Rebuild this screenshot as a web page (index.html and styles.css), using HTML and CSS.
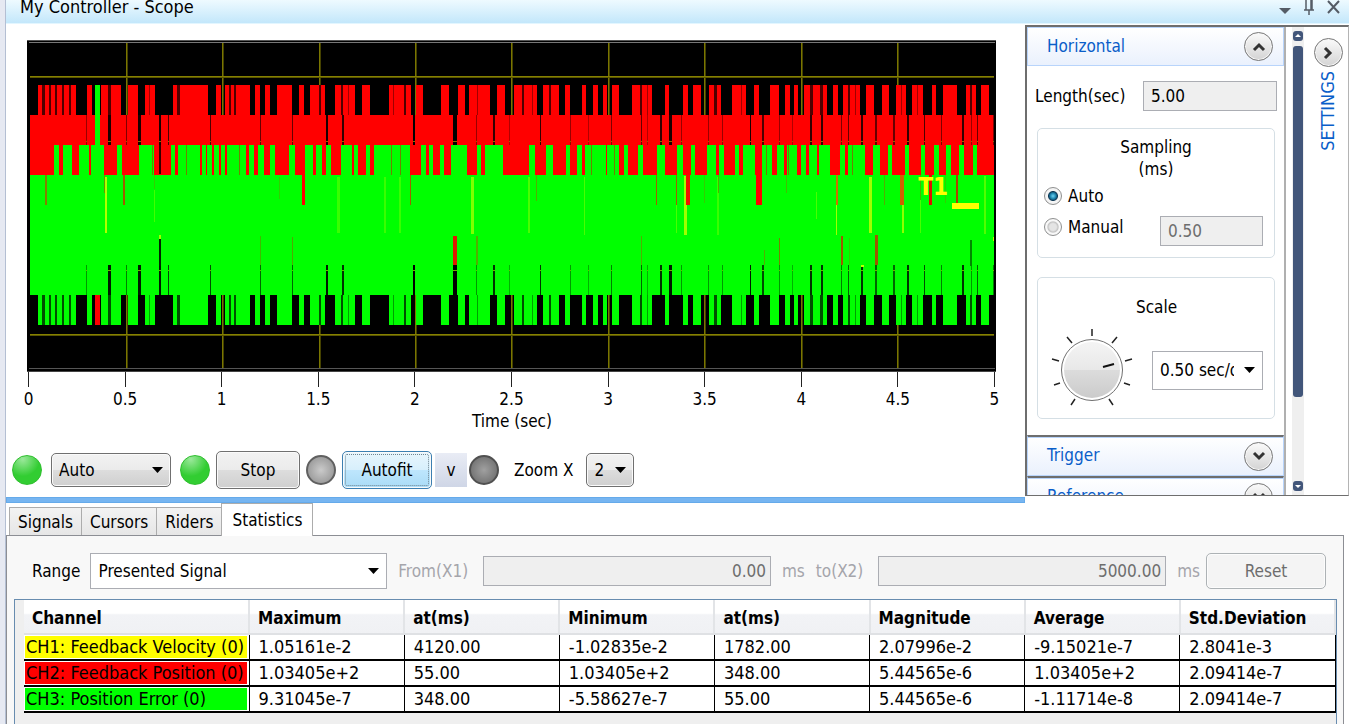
FILE: index.html
```html
<!DOCTYPE html>
<html lang="en">
<head>
    <meta charset="UTF-8">
    <meta name="viewport" content="width=device-width, initial-scale=1.0">
    <title>My Controller - Scope</title>
    <link rel="stylesheet" href="styles.css">
</head>
<body>
    <div class="window">
        <header class="titlebar">
            <h1>My Controller - Scope</h1>
            <div class="title-buttons">
                <button aria-label="Menu"><svg width="12" height="14"><path d="M0 7h12l-6 6z" fill="#555c66"/></svg></button>
                <button aria-label="Pin"><svg width="12" height="16"><path d="M3 0v10M8 0v10M9 0v10M1 10h10M6 10v5" stroke="#555c66" stroke-width="1.5" fill="none"/></svg></button>
                <button aria-label="Close"><svg width="14" height="16"><path d="M1 1l11 12M12 1L1 13" stroke="#555c66" stroke-width="2" fill="none"/></svg></button>
            </div>
        </header>

        <div class="top">
            <main class="scope">
                <div class="plot">
                    <svg id="trace" viewBox="27 40 969 332" preserveAspectRatio="none"></svg>
                    <span class="marker-name">T1</span>
                    <span class="marker-line"></span>
                </div>
                <ul class="axis">
                    <li>0</li><li>0.5</li><li>1</li><li>1.5</li><li>2</li><li>2.5</li><li>3</li><li>3.5</li><li>4</li><li>4.5</li><li>5</li>
                </ul>
                <p class="axis-title">Time (sec)</p>

                <div class="toolbar">
                    <span class="led green"></span>
                    <select class="raised mode" aria-label="Mode"><option>Auto</option></select>
                    <span class="led green"></span>
                    <button class="raised stop">Stop</button>
                    <span class="led gray"></span>
                    <button class="raised autofit">Autofit</button>
                    <button class="more">v</button>
                    <span class="led dark"></span>
                    <label for="zoom" class="zoom-label">Zoom X</label>
                    <select id="zoom" class="raised zoom"><option>2</option></select>
                </div>
                <div class="splitter"></div>
            </main>

            <aside class="settings">
                <div class="accordion">
                    <div class="acc-head">
                        <h2>Horizontal</h2>
                        <button class="round" aria-label="Collapse"><svg width="16" height="12"><path d="M3 9l5-5 5 5" stroke="#333" stroke-width="3" fill="none"/></svg></button>
                    </div>
                    <div class="acc-body">
                        <div class="length">
                            <label for="length">Length(sec)</label>
                            <input id="length" class="field" type="text" value="5.00">
                        </div>
                        <fieldset class="group sampling">
                            <p>Sampling<br>(ms)</p>
                            <div class="choice">
                                <input type="radio" name="sampling" id="auto" checked>
                                <label for="auto">Auto</label>
                            </div>
                            <div class="choice">
                                <input type="radio" name="sampling" id="manual">
                                <label for="manual">Manual</label>
                                <input class="field" type="text" value="0.50" aria-label="Sampling time" disabled>
                            </div>
                        </fieldset>
                        <fieldset class="group scale">
                            <p>Scale</p>
                            <div class="scale-row">
                                <svg width="84" height="84" viewBox="-42 -42 84 84">
                                    <defs>
                                        <linearGradient id="knob" x1="0" y1="0" x2="0" y2="1">
                                            <stop offset="0" stop-color="#f4f4f4"/>
                                            <stop offset=".5" stop-color="#e8e8e8"/>
                                            <stop offset=".5" stop-color="#dcdcdc"/>
                                            <stop offset="1" stop-color="#cbcbcb"/>
                                        </linearGradient>
                                    </defs>
                                    <circle r="30.5" fill="#fff" stroke="#707070"/>
                                    <circle r="28" fill="url(#knob)"/>
                                    <path d="M11-3L22-6" stroke="#111" stroke-width="2"/>
                                    <path d="M0-41v7M25-33l-5 6M40-11l-7 2M38 15l-6-2M21 35l-4-6M-25-33l5 6M-40-11l7 2M-38 15l6-2M-21 35l4-6" stroke="#222" stroke-width="1.5"/>
                                </svg>
                                <select class="flat" aria-label="Scale"><option>0.50 sec/div</option></select>
                            </div>
                        </fieldset>
                    </div>
                    <div class="acc-head">
                        <h2>Trigger</h2>
                        <button class="round" aria-label="Expand"><svg width="16" height="12"><path d="M3 3l5 5 5-5" stroke="#333" stroke-width="3" fill="none"/></svg></button>
                    </div>
                    <div class="acc-head">
                        <h2>Reference</h2>
                        <button class="round" aria-label="Expand"><svg width="16" height="12"><path d="M3 3l5 5 5-5" stroke="#333" stroke-width="3" fill="none"/></svg></button>
                    </div>
                </div>
                <div class="scrollbar">
                    <button aria-label="Scroll up"><svg width="10" height="10"><rect width="10" height="10" rx="3" fill="#42567a"/><path d="M2 6h6L5 3z" fill="#fff"/></svg></button>
                    <div class="thumb"></div>
                    <button aria-label="Scroll down"><svg width="10" height="10"><rect width="10" height="10" rx="3" fill="#42567a"/><path d="M2 4h6L5 7z" fill="#fff"/></svg></button>
                </div>
                <div class="side">
                    <button class="round" aria-label="Hide settings"><svg width="12" height="16"><path d="M3 3l5 5-5 5" stroke="#333" stroke-width="3" fill="none"/></svg></button>
                    <span>SETTINGS</span>
                </div>
            </aside>
        </div>

        <nav class="tabs">
            <button>Signals</button>
            <button>Cursors</button>
            <button>Riders</button>
            <button class="active">Statistics</button>
        </nav>

        <section class="stats">
            <div class="filter">
                <label for="range">Range</label>
                <select id="range" class="flat"><option>Presented Signal</option></select>
                <label for="x1" class="off from">From(X1)</label>
                <input id="x1" class="field" type="text" value="0.00" disabled>
                <span class="off unit">ms</span>
                <label for="x2" class="off to">to(X2)</label>
                <input id="x2" class="field" type="text" value="5000.00" disabled>
                <span class="off unit last">ms</span>
                <button class="reset" disabled>Reset</button>
            </div>
            <div class="grid">
                <table>
                    <colgroup><col class="c-channel"><col><col><col><col><col><col><col></colgroup>
                    <thead>
                        <tr><th>Channel</th><th>Maximum</th><th>at(ms)</th><th>Minimum</th><th>at(ms)</th><th>Magnitude</th><th>Average</th><th>Std.Deviation</th></tr>
                    </thead>
                    <tbody>
                        <tr><td><span class="ch yellow">CH1: Feedback Velocity (0)</span></td><td>1.05161e-2</td><td>4120.00</td><td>-1.02835e-2</td><td>1782.00</td><td>2.07996e-2</td><td>-9.15021e-7</td><td>2.8041e-3</td></tr>
                        <tr><td><span class="ch red">CH2: Feedback Position (0)</span></td><td>1.03405e+2</td><td>55.00</td><td>1.03405e+2</td><td>348.00</td><td>5.44565e-6</td><td>1.03405e+2</td><td>2.09414e-7</td></tr>
                        <tr><td><span class="ch lime">CH3: Position Error (0)</span></td><td>9.31045e-7</td><td>348.00</td><td>-5.58627e-7</td><td>55.00</td><td>5.44565e-6</td><td>-1.11714e-8</td><td>2.09414e-7</td></tr>
                    </tbody>
                </table>
            </div>
        </section>
    </div>
    <script src="scope.js"></script>
</body>
</html>
```
FILE: styles.css
```css
* {
    box-sizing: border-box;
}
body {
    margin: 0;
    background: #e6e9f2;
    color: #000;
    font-family: "DejaVu Sans Condensed", "DejaVu Sans", sans-serif;
    font-size: 17px;
    line-height: 22px;
    overflow: hidden;
}
button, input, select {
    font: inherit;
    color: inherit;
    margin: 0;
}
button {
    padding: 0;
    border: none;
    background: none;
}
p, h1, h2, ul, fieldset {
    margin: 0;
    padding: 0;
}
.window {
    display: flex;
    flex-direction: column;
    min-height: 100vh;
    margin-left: 5px;
    background: #fff;
    border-left: 1px solid #b4bfd3;
}
.titlebar {
    display: flex;
    justify-content: space-between;
    align-items: flex-start;
    height: 24px;
    margin-right: 5px;
    padding: 0 8px 0 14px;
    background: linear-gradient(#eefaff, #c3e7fb);
    border-bottom: 1px solid #e3f6ff;
    overflow: hidden;
}
.titlebar h1 {
    font-size: 18px;
    font-weight: normal;
    line-height: 14px;
}
.title-buttons {
    display: flex;
    gap: 12px;
}
.title-buttons svg {
    display: block;
}
.top {
    display: flex;
    height: 479px;
    margin-right: 5px;
}
.scope {
    display: flex;
    flex-direction: column;
    flex: 1;
    min-width: 0;
    padding-top: 16px;
}
.plot {
    position: relative;
    height: 332px;
    margin: 0 29px 0 21px;
}
.plot svg {
    display: block;
    width: 100%;
    height: 100%;
}
.marker-name {
    position: absolute;
    top: 136px;
    right: 48px;
    color: #ff0;
    font-size: 24px;
    font-weight: bold;
}
.marker-line {
    position: absolute;
    top: 163px;
    right: 17px;
    width: 27px;
    height: 6px;
    background: #ff0;
}
.axis {
    display: flex;
    justify-content: space-between;
    margin: 0 30px 0 22px;
    list-style: none;
}
.axis li {
    display: flex;
    flex-direction: column;
    align-items: center;
    width: 1px;
}
.axis li::before {
    content: "";
    width: 1px;
    height: 15px;
    margin-bottom: 1px;
    background: #222;
}
.axis-title {
    padding-right: 7px;
    text-align: center;
}
.toolbar {
    display: flex;
    align-items: center;
    height: 40px;
    margin-top: 18px;
    padding-left: 6px;
}
.led {
    flex: none;
    width: 30px;
    height: 30px;
    border-radius: 50%;
}
.led.green {
    background: radial-gradient(circle at 35% 12%, #9be89b, #32cd32 55%);
    border: 1px solid #2fbf2f;
}
.led.gray {
    background: radial-gradient(#cacaca, #8c8c8c);
    border: 2px solid #606060;
}
.led.dark {
    margin-left: 2px;
    background: radial-gradient(#a0a0a0, #666);
    border: 2px solid #505050;
}
select {
    appearance: none;
    border-radius: 0;
    background: url("data:image/svg+xml,%3Csvg xmlns='http://www.w3.org/2000/svg' width='11' height='6'%3E%3Cpath d='M0 0h11L5.5 6z'/%3E%3C/svg%3E") no-repeat right 7px center #fff;
}
.raised {
    border: 1px solid #707070;
    border-radius: 5px;
    background-color: #e4e4e4;
    box-shadow: inset 0 0 0 1px #fafafa;
}
.mode, .zoom {
    height: 34px;
    padding-left: 7px;
    background-image: url("data:image/svg+xml,%3Csvg xmlns='http://www.w3.org/2000/svg' width='11' height='6'%3E%3Cpath d='M0 0h11L5.5 6z'/%3E%3C/svg%3E"), linear-gradient(#f2f2f2, #ebebeb 50%, #ddd 50%, #cfcfcf);
    background-position: right 7px center, 0 0;
    background-repeat: no-repeat;
}
.mode {
    width: 120px;
    margin: 0 9px;
}
.stop, .autofit {
    height: 38px;
    margin: 0 6px;
    background-image: linear-gradient(#f2f2f2, #ebebeb 50%, #ddd 50%, #cfcfcf);
}
.stop {
    width: 84px;
}
.autofit {
    width: 90px;
    margin-right: 3px;
    border-color: #3c7fb1;
    background-image: linear-gradient(#e8f6fd, #d7effc 50%, #bee6fd 50%, #a9dbf6);
    outline: 1px dotted #6f8490;
    outline-offset: -4px;
}
.more {
    width: 32px;
    height: 34px;
    background: linear-gradient(#e9ecf5, #cfd6e6);
}
.zoom-label {
    margin: 0 13px 0 15px;
}
.zoom {
    width: 48px;
}
.splitter {
    height: 6px;
    margin-top: auto;
    background: #76b5f1;
    border: 1px solid #65aaea;
}
.settings {
    display: flex;
    width: 324px;
    height: 471px;
    margin-top: 1px;
    border: solid #6e6e6e;
    border-width: 2px 0 1px 2px;
    border-right: 1px solid #b4b4b4;
}
.accordion {
    width: 259px;
    overflow: hidden;
    border-right: 2px solid #b0b0b0;
}
.acc-head {
    display: flex;
    justify-content: space-between;
    align-items: center;
    height: 39px;
    padding: 0 10px 0 19px;
    border: 1px solid #b8d4fb;
    background: linear-gradient(#fff, #eaf1fd);
}
.acc-head h2 {
    padding-bottom: 2px;
    color: #0a5ec9;
    font-size: 17px;
    font-weight: normal;
}
.acc-body + .acc-head, .acc-head + .acc-head {
    height: 41px;
    border-top: 2px solid #6e6e6e;
    box-shadow: inset 0 1px #b8d4fb;
}
.round {
    display: flex;
    align-items: center;
    justify-content: center;
    flex: none;
    width: 29px;
    height: 29px;
    border: 1px solid #777;
    border-radius: 50%;
    background: linear-gradient(#fafafa, #d4d4d4);
    box-shadow: inset 0 0 0 1px #f6f6f6;
}
.acc-body {
    height: 369px;
    padding: 15px 7px 0 8px;
}
.length, .choice, .scale-row {
    display: flex;
    align-items: center;
}
.length {
    justify-content: space-between;
}
.field {
    border: 1px solid #abadb3;
    background: #efefef;
    height: 30px;
    padding: 0 7px;
}
.field:disabled {
    color: #6d6d6d;
}
.length .field {
    width: 134px;
}
.group {
    min-width: 0;
    margin: 17px 2px 0;
    border: 1px solid #d5dfe5;
    border-radius: 5px;
}
.group p {
    text-align: center;
}
.sampling {
    height: 130px;
    padding: 7px 11px 0 6px;
}
.sampling p {
    padding-left: 5px;
}
.choice {
    height: 31px;
    gap: 6px;
}
.choice .field {
    width: 103px;
    margin: 8px 0 0 auto;
}
.choice input[type="radio"] {
    appearance: none;
    width: 18px;
    height: 18px;
    border: 1px solid #8e8f8f;
    border-radius: 50%;
    background: radial-gradient(#e4e4e4 30%, #c4c4c4 45%, #f8f8f8 55%);
}
.choice input[type="radio"]:checked {
    background: radial-gradient(circle at 50% 50%, #6fd3f2 0, #1c83ae 25%, #123b57 40%, #f4f4f4 48%);
}
.scale {
    height: 142px;
    margin-top: 19px;
    padding: 18px 11px 0 12px;
}
.scale-row {
    justify-content: space-between;
    margin-top: 10px;
}
.flat {
    height: 39px;
    padding: 0 28px 0 7px;
    border: 1px solid #abadb3;
}
.scale-row .flat {
    width: 111px;
}
.scrollbar {
    display: flex;
    flex-direction: column;
    align-items: center;
    width: 12px;
    margin-left: 6px;
    padding: 4px 0;
    background: #efefef;
}
.scrollbar svg {
    display: block;
}
.thumb {
    width: 10px;
    height: 351px;
    margin: 5px 0 auto;
    border-radius: 3px;
    background: #42567a;
}
.side {
    flex: 1;
    display: flex;
    flex-direction: column;
    align-items: center;
    padding: 11px 0 0 4px;
}
.side span {
    margin-top: 4px;
    color: #0a5ec9;
    font-size: 18px;
    writing-mode: vertical-rl;
    transform: rotate(180deg);
}
.tabs {
    display: flex;
    align-items: flex-end;
    height: 32px;
    padding-left: 3px;
}
.tabs button {
    height: 28px;
    padding: 0 8px;
    border: 1px solid #acacac;
    border-width: 1px 0 0 1px;
    background: linear-gradient(#f3f3f3, #e6e6e6);
}
.tabs .active {
    z-index: 1;
    height: 33px;
    margin-bottom: -1px;
    padding: 0 10px;
    border-right-width: 1px;
    background: #fff;
}
.stats {
    flex: 1;
    display: flex;
    flex-direction: column;
    margin-right: 10px;
    padding: 17px 6px 0 7px;
    border: solid #8c8e94;
    border-width: 1px 1px 0 1px;
    background: #f8f8f8;
}
.filter {
    display: flex;
    align-items: center;
    height: 36px;
    padding: 0 11px 0 18px;
}
.filter .flat {
    flex: 1 1 295px;
    min-width: 0;
    height: 36px;
    margin: 0 11px 0 10px;
    padding-left: 7px;
}
.filter .field {
    flex: 1 1 286px;
    min-width: 0;
    text-align: right;
    padding: 0 4px;
}
.off {
    color: #a5a5ab;
}
.from, .to {
    margin-right: 15px;
}
.unit {
    margin: 0 11px;
}
.last {
    margin-right: 6px;
}
.reset {
    flex: none;
    width: 120px;
    height: 36px;
    border: 1px solid #adb2b5;
    border-radius: 5px;
    background: #f4f4f4;
    box-shadow: inset 0 0 0 1px #fcfcfc;
    color: #6d6d6d;
}
.grid {
    flex: 1;
    margin-top: 10px;
    padding-left: 9px;
    border: 1px solid #688caf;
    border-bottom: none;
    background: #efefef;
}
table {
    width: 100%;
    border-collapse: collapse;
    table-layout: fixed;
}
.c-channel {
    width: 225px;
}
th {
    height: 34px;
    padding: 2px 8px 0;
    border-right: 2px solid #e2e4e7;
    border-bottom: 2px solid #dfe1e4;
    background: linear-gradient(#fff 40%, #f2f3f6 45%, #f0f1f4);
    text-align: left;
}
td {
    height: 26px;
    padding: 0 9px;
    border: solid #000;
    border-width: 0 1px 2px;
    background: #fff;
    font-size: 18px;
    line-height: 22px;
}
td:first-child {
    padding: 0 2px 0 1px;
    border-left: none;
}
.ch {
    display: block;
    padding-left: 1px;
    white-space: nowrap;
}
.yellow {
    background: #ff0;
}
.red {
    background: #f00;
}
.lime {
    background: #0f0;
}
```
FILE: scope.js
```javascript
var svg = document.getElementById('trace');

function rect(x, y, w, h, color) {
    var r = document.createElementNS('http://www.w3.org/2000/svg', 'rect');
    r.setAttribute('x', x);
    r.setAttribute('y', y);
    r.setAttribute('width', w);
    r.setAttribute('height', h);
    r.setAttribute('fill', color);
    svg.appendChild(r);
}

// start and end of every outer peak
var peaks = [
    [38,42],[45,49],[51,55],[57,62],[64,69],[71,76],[87,92],[101,108],[111,121],[128,138],[145,149],[150,155],
    [173,177],[180,208],[216,221],[225,229],[231,234],[236,250],[255,260],[265,270],[277,292],[299,304],[310,319],
    [321,325],[335,341],[343,348],[349,355],[362,370],[389,393],[394,404],[406,411],[416,423],[441,449],[458,465],
    [469,477],[478,490],[497,505],[514,522],[524,532],[533,537],[543,549],[551,559],[565,570],[582,586],[593,598],
    [603,607],[612,619],[632,640],[642,647],[648,652],[665,669],[683,688],[693,701],[709,714],[717,721],[732,741],
    [742,746],[754,759],[770,779],[785,790],[794,798],[804,810],[813,820],[823,827],[833,838],[843,848],[850,855],
    [856,860],[866,874],[882,889],[896,901],[902,906],[912,917],[918,923],[932,936],[943,957],[966,970],[972,976],[981,989]
];
// position error above the middle level
var inner = [
    [54,59],[63,72],[79,89],[91,104],[117,122],[139,154],[171,175],[178,186],[187,200],[202,206],[207,212],[214,219],
    [221,225],[227,246],[249,254],[258,264],[270,275],[289,295],[305,313],[316,322],[326,331],[341,352],[354,358],
    [366,370],[374,410],[421,426],[429,433],[440,444],[451,467],[477,481],[485,503],[529,535],[546,553],[566,570],
    [577,582],[585,606],[607,619],[624,628],[638,643],[657,665],[677,683],[691,695],[707,716],[719,724],[735,739],
    [743,755],[762,772],[777,784],[787,797],[801,806],[809,817],[819,830],[840,845],[848,865],[873,880],[888,892],
    [905,909],[921,925],[934,939],[946,951],[959,964],[973,977]
];
// x, width, opacity of the gaps
var gaps = [
    [86,1,.4],[108,3,.9],[126,1,.5],[138,3,.9],[159,2,.9],[168,1,.7],[210,1,.7],[260,1,.6],[292,1,.6],[326,2,.9],
    [342,2,.8],[413,2,1],[453,4,1],[476,1,.4],[493,2,.8],[509,1,.3],[540,1,.8],[570,1,.4],[588,1,.3],[611,1,.5],
    [641,1,.6],[647,1,.3],[660,2,.8],[669,3,.9],[681,1,.4],[708,1,.4],[722,1,.4],[750,1,.9],[762,2,.7],[779,1,.4],
    [792,1,.3],[810,2,.8],[821,2,.8],[841,1,.5],[848,1,.6],[861,2,.8],[875,2,.6],[893,2,.6],[907,2,.8],[924,1,.7],
    [941,1,.5],[962,2,.8],[971,1,.4],[977,1,.6],[993,1,.5]
];
var slivers = [
    // velocity
    [105,177,2,56,'#b0ff00'],[154,190,1,32,'#40ff00'],[337,177,3,56,'#38ff00'],[384,177,2,56,'#38ff00'],[399,177,2,56,'#38ff00'],
    [471,177,3,57,'#80ff00'],[528,177,2,56,'#48ff00'],[584,177,1,58,'#48ff00'],[676,205,1,28,'#48ff00'],[684,176,3,59,'#a0ff00'],
    [717,177,2,58,'#38ff00'],[816,192,1,27,'#48ff00'],[836,205,1,30,'#a0ff00'],[869,177,3,56,'#a0ff00'],[902,205,2,28,'#90ff00'],
    [920,200,1,33,'#48ff00'],[984,176,2,58,'#50ff00'],[861,265,3,2,'#c0ff00'],[159,235,2,4,'#a0ff00'],[993,237,1,4,'#c0ff00'],
    // position
    [45,175,2,30,'#838000'],[104,175,1,18,'#659a00'],[123,175,2,30,'#a05a00'],[154,175,1,14,'#30d000'],[302,175,3,30,'#f00'],
    [279,177,1,22,'#30d000'],[410,175,1,30,'#a06000'],[536,175,1,26,'#50b000'],[656,175,1,30,'#a06000'],[676,175,1,30,'#a06000'],
    [686,175,4,30,'#f01000'],[704,175,1,28,'#30d000'],[718,175,1,18,'#50b000'],[756,175,6,30,'#f00'],[786,175,1,18,'#40c000'],
    [836,175,2,30,'#d07000'],[884,175,1,30,'#50b000'],[900,175,4,30,'#d06000'],[920,175,1,25,'#50b000'],[929,175,3,30,'#e01000'],
    [945,175,1,28,'#30d000'],[956,175,2,30,'#b04000'],
    [260,236,1,29,'#40b800'],[292,237,1,28,'#50a800'],[453,236,4,29,'#e01800'],[476,236,2,29,'#50b000'],[641,236,1,29,'#50b000'],
    [764,250,1,15,'#50b000'],[779,238,1,27,'#788000'],[841,236,2,29,'#a05800'],[849,238,1,27,'#30d000'],[875,235,3,30,'#a05800'],
    [95,85,5,60,'#0f0'],[95,295,5,30,'#f00'],
    [159,145,2,29,'#300'],[159,239,2,27,'#020'],[970,240,2,26,'#080']
];

// frame and graticule
rect(27, 40, 969, 332, '#000');
rect(27, 40, 969, 1, '#555');
rect(29, 42, 966, 1, '#777');
rect(29, 368, 966, 1, '#555');
rect(27, 371, 969, 1, '#444');
[126, 222, 319, 415, 511, 608, 704, 801, 897].forEach(function (x) {
    rect(x, 43, 1, 325, '#7a7600');
    rect(x + 1, 43, 1, 325, '#454200');
});
[76, 334].forEach(function (y) {
    rect(30, y, 964, 1, '#858000');
    rect(30, y + 1, 964, 1, '#5a5600');
});

// traces
peaks.forEach(function (p) {
    rect(p[0], 85, p[1] - p[0], 31, '#f00');
    rect(p[0], 294, p[1] - p[0], 31, '#0f0');
});
// narrow dips between two peaks are never fully dark
for (var i = 1; i < peaks.length; i++) {
    var end = peaks[i - 1][1];
    var dip = peaks[i][0] - end;
    if (dip < 4) {
        rect(end, 85, dip, 30, dip < 2 ? '#a00000' : '#500000');
        rect(end, 295, dip, 30, dip < 2 ? '#00a000' : '#005000');
    }
}
rect(30, 115, 964, 60, '#f00');
rect(30, 175, 964, 120, '#0f0');
inner.forEach(function (p) {
    rect(p[0], 145, p[1] - p[0], 30, '#0f0');
});
gaps.forEach(function (g) {
    rect(g[0], 115, g[1], 30, 'rgba(0,0,0,' + g[2] + ')');
    rect(g[0], 265, g[1], 30, 'rgba(0,0,0,' + g[2] + ')');
    rect(g[0], 141, g[1], 1, '#8a7000');
    rect(g[0], 270, g[1], 1, '#6fb000');
});
[152, 186, 239, 391, 400, 591, 614, 766, 788, 852].forEach(function (x) {
    rect(x, 145, 1, 30, '#708000');
});
slivers.forEach(function (s) {
    rect(s[0], s[1], s[2], s[3], s[4]);
});
```
